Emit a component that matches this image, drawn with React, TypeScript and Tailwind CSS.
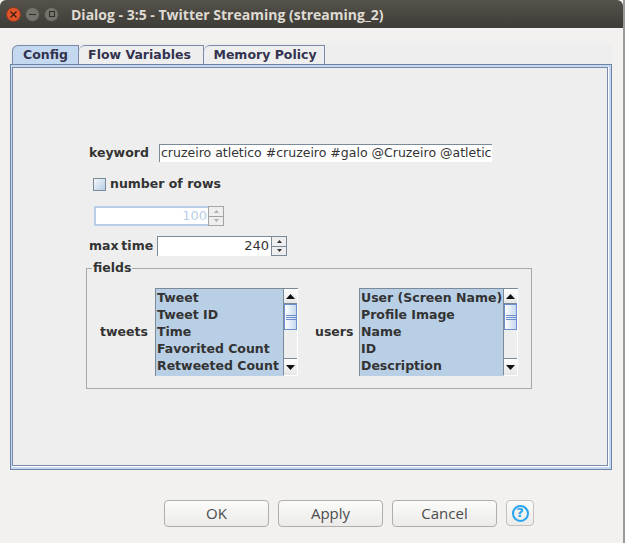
const dv = "font-['DejaVu_Sans',sans-serif]";

function ListBox({ items, width }: { items: string[]; width: string }) {
  return (
    <div className="flex h-[88px] border-t border-l border-[#7a8a99]">
      <div className={`${width} bg-[#b8cfe5] pl-[1px] overflow-hidden`}>
        {items.map((t) => (
          <div key={t} className="h-[17px] leading-[17px] text-[12.5px] font-bold text-[#333333] whitespace-nowrap">{t}</div>
        ))}
      </div>
      <div className="w-[15px] flex flex-col bg-[#eeeeee] border-l border-[#7a8a99] border-r border-b border-r-[#ffffff] border-b-[#ffffff]">
        <div className="h-[15px] flex items-center justify-center bg-gradient-to-b from-white to-[#e6e6e6] border-b border-[#7a8a99]">
          <svg width="9" height="5"><path d="M4.5 0L9 5H0z" fill="#111" /></svg>
        </div>
        <div className="h-[26px] bg-gradient-to-r from-white to-[#c5d9ee] border border-[#6d8fd0] flex flex-col items-center justify-center gap-[1px]">
          <div className="w-[10px] h-[1px] bg-[#6d8fd0]" />
          <div className="w-[10px] h-[1px] bg-[#6d8fd0]" />
          <div className="w-[10px] h-[1px] bg-[#6d8fd0]" />
        </div>
        <div className="flex-1" />
        <div className="h-[17px] flex items-center justify-center bg-gradient-to-b from-white to-[#e6e6e6] border-t border-[#7a8a99]">
          <svg width="9" height="5"><path d="M0 0H9L4.5 5z" fill="#111" /></svg>
        </div>
      </div>
    </div>
  );
}

function Spinner({ value, disabled, w }: { value: string; disabled?: boolean; w: string }) {
  const sb = disabled ? "border-[#a3a3a3]" : "border-[#7a8a99]";
  const arrow = disabled ? "#b0b0b0" : "#333";
  const field = disabled
    ? "border-2 border-r-0 border-[#b8cfe5] text-[#b8cfe5] leading-[16px] pr-[1px]"
    : "border-t border-l border-[#7a8a99] text-[#333] leading-[18px] pr-[2px]";
  return (
    <div className="flex h-[20px]">
      <div className={`${w} ${field} bg-white text-right text-[13px]`}>{value}</div>
      <div className={`w-[16px] flex flex-col border ${sb} bg-[#eeeeee]`}>
        <div className={`flex-1 flex items-center justify-center border-b ${sb}`}>
          <svg width="5" height="3"><path d="M2.5 0L5 3H0z" fill={arrow} /></svg>
        </div>
        <div className="flex-1 flex items-center justify-center">
          <svg width="5" height="3"><path d="M0 0H5L2.5 3z" fill={arrow} /></svg>
        </div>
      </div>
    </div>
  );
}

function Btn({ label }: { label: string }) {
  return (
    <div className="w-[105px] h-[27px] rounded-[4px] border border-[#b0aea9] bg-gradient-to-b from-[#fbfbfa] to-[#ecebe9] flex items-center justify-center text-[15px] text-[#4c4c4c] font-['Open_Sans',sans-serif]">
      {label}
    </div>
  );
}

export default function App() {
  return (
    <div className={`w-[625px] h-[543px] bg-[#f2f1f0] border-r-2 border-[#9a9a9a] flex flex-col overflow-hidden ${dv}`}>
      <div className="h-[28px] w-[623px] rounded-t-[6px] bg-gradient-to-b from-[#55524b] to-[#3e3c37] flex items-center pl-[6px]">
        <div className="w-[15px] h-[15px] rounded-full bg-[#e2552b] flex items-center justify-center border border-[#8a3a20]">
          <svg width="7" height="7"><path d="M0.5 0.5L6.5 6.5M6.5 0.5L0.5 6.5" stroke="#3a1a10" strokeWidth="1.2" /></svg>
        </div>
        <div className="ml-[4px] w-[15px] h-[15px] rounded-full bg-[#75736c] flex items-center justify-center border border-[#4a4842]">
          <div className="w-[7px] h-[1px] bg-[#2f2e2a]" />
        </div>
        <div className="ml-[4px] w-[15px] h-[15px] rounded-full bg-[#75736c] flex items-center justify-center border border-[#4a4842]">
          <div className="w-[6px] h-[6px] border border-[#2f2e2a]" />
        </div>
        <div className="ml-[12px] text-[14px] font-bold text-[#dfdbd2] font-['Open_Sans',sans-serif] whitespace-nowrap">Dialog - 3:5 - Twitter Streaming (streaming_2)</div>
      </div>

      <div className="mt-[15px] mx-[10px] w-[602px] h-[427px] bg-[#eeeeee] flex flex-col">
        <div className="flex h-[21px] pl-[2px] pt-[2px] text-[12.5px] font-bold text-[#333350]">
          <div className="w-[67px] bg-[#c4d9ef] border-t border-l border-r border-[#7a8aa8] rounded-tl-[6px] flex items-center justify-center">Config</div>
          <div className="w-[125px] border-t border-r border-[#7a8aa8] rounded-tl-[6px] flex items-center justify-center bg-[#eeeeee] pr-[3px]">Flow Variables</div>
          <div className="w-[121px] border-t border-r border-[#7a8aa8] rounded-tl-[6px] flex items-center justify-center bg-[#eeeeee] pl-[2px]">Memory Policy</div>
        </div>
        <div className="w-[602px] h-[406px] border border-[#6f83a8] bg-[#c4d9ef] pl-[1px] pt-[2px] pr-[2px] pb-[2px]">
          <div className="w-full h-full border-r border-b border-white">
            <div className="w-full h-full border border-[#7a8aa8] bg-[#eeeeee] flex flex-col items-start pl-[76px] pt-[75px] text-[#333]">
              <div className="flex items-center h-[20px]">
                <div className="w-[70px] text-[12.5px] font-bold">keyword</div>
                <div className="w-[333px] h-[18px] bg-white border-t border-l border-[#7a8a99] text-[12.5px] leading-[16px] pl-[1px] overflow-hidden whitespace-nowrap">cruzeiro atletico #cruzeiro #galo @Cruzeiro @atletico</div>
              </div>
              <div className="flex items-center h-[20px] mt-[11px] ml-[4px]">
                <div className="w-[13px] h-[13px] border border-[#7a8a99] bg-gradient-to-br from-[#f4f7fb] to-[#b8cfe5]" />
                <div className="ml-[4px] text-[12.5px] font-bold">number of rows</div>
              </div>
              <div className="mt-[12px] ml-[5px]"><Spinner value="100" disabled w="w-[114px]" /></div>
              <div className="flex items-center mt-[10px]">
                <div className="w-[68px] text-[12.5px] font-bold whitespace-nowrap [word-spacing:-1.5px]">max time</div>
                <Spinner value="240" w="w-[114px]" />
              </div>
              <fieldset className="mt-[5px] ml-[-3px] w-[446px] h-[128px] border border-[#a8a8a8] px-[13px] pt-[13px]">
                <legend className="ml-[-8px] px-[1px] text-[12.5px] font-bold leading-[14px]">fields</legend>
                <div className="flex items-center">
                  <div className="w-[55px] text-[12.5px] font-bold">tweets</div>
                  <ListBox width="w-[127px]" items={["Tweet", "Tweet ID", "Time", "Favorited Count", "Retweeted Count"]} />
                  <div className="ml-[17px] w-[44px] text-[12.5px] font-bold">users</div>
                  <ListBox width="w-[143px]" items={["User (Screen Name)", "Profile Image", "Name", "ID", "Description"]} />
                </div>
              </fieldset>
            </div>
          </div>
        </div>
      </div>

      <div className="flex items-start mt-[30px] ml-[164px] gap-[9px]">
        <Btn label="OK" />
        <Btn label="Apply" />
        <Btn label="Cancel" />
        <div className="w-[28px] h-[26px] rounded-[4px] border border-[#c4c2bd] bg-gradient-to-b from-[#fbfbfa] to-[#ecebe9] flex items-center justify-center">
          <div className="w-[17px] h-[17px] rounded-full border-2 border-[#2aa4ee] flex items-center justify-center text-[13px] font-bold text-[#2aa4ee]">?</div>
        </div>
      </div>
    </div>
  );
}
